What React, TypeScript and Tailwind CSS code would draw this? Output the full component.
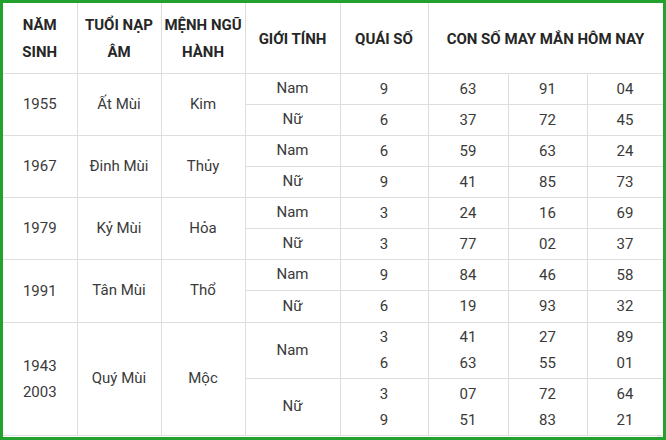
import React from "react";

type Sub = { g: string; q: string[]; a: string[]; b: string[]; c: string[] };
type Group = { years: string[]; tuoi: string; menh: string; subs: Sub[]; h: number[] };

const groups: Group[] = [
  { years: ["1955"], tuoi: "Ất Mùi", menh: "Kim", h: [31, 31], subs: [
    { g: "Nam", q: ["9"], a: ["63"], b: ["91"], c: ["04"] },
    { g: "Nữ", q: ["6"], a: ["37"], b: ["72"], c: ["45"] },
  ] },
  { years: ["1967"], tuoi: "Đinh Mùi", menh: "Thủy", h: [31, 31], subs: [
    { g: "Nam", q: ["6"], a: ["59"], b: ["63"], c: ["24"] },
    { g: "Nữ", q: ["9"], a: ["41"], b: ["85"], c: ["73"] },
  ] },
  { years: ["1979"], tuoi: "Kỷ Mùi", menh: "Hỏa", h: [31, 31], subs: [
    { g: "Nam", q: ["3"], a: ["24"], b: ["16"], c: ["69"] },
    { g: "Nữ", q: ["3"], a: ["77"], b: ["02"], c: ["37"] },
  ] },
  { years: ["1991"], tuoi: "Tân Mùi", menh: "Thổ", h: [31, 32], subs: [
    { g: "Nam", q: ["9"], a: ["84"], b: ["46"], c: ["58"] },
    { g: "Nữ", q: ["6"], a: ["19"], b: ["93"], c: ["32"] },
  ] },
  { years: ["1943", "2003"], tuoi: "Quý Mùi", menh: "Mộc", h: [56, 57], subs: [
    { g: "Nam", q: ["3", "6"], a: ["41", "63"], b: ["27", "55"], c: ["89", "01"] },
    { g: "Nữ", q: ["3", "9"], a: ["07", "51"], b: ["72", "83"], c: ["64", "21"] },
  ] },
];

const cell = "border border-[#dedede] text-center align-middle p-0";

function Lines({ v }: { v: string[] }) {
  return (
    <>
      {v.map((x, i) => (
        <div key={i} className="leading-[26px]">{x}</div>
      ))}
    </>
  );
}

export default function App() {
  return (
    <div className="w-[666px] h-[440px] bg-white border-[3px] border-[#23a12f] box-border overflow-hidden" style={{ fontFamily: "Roboto, 'Liberation Sans', sans-serif" }}>
      <table className="table-fixed border-collapse w-[660px] text-[15px] text-[#3a3a3a]">
        <colgroup>
          <col className="w-[74px]" />
          <col className="w-[84px]" />
          <col className="w-[84px]" />
          <col className="w-[95px]" />
          <col className="w-[88px]" />
          <col className="w-[80px]" />
          <col className="w-[79px]" />
          <col className="w-[76px]" />
        </colgroup>
        <thead>
          <tr className="h-[70px] font-bold text-[#262626] leading-[27px]">
            <th className={`${cell} border-t-0 border-l-0 pt-[3px]`}>NĂM<br />SINH</th>
            <th className={`${cell} border-t-0 pt-[3px]`}>TUỔI NẠP<br />ÂM</th>
            <th className={`${cell} border-t-0 pt-[3px]`}>MỆNH NGŨ<br />HÀNH</th>
            <th className={`${cell} border-t-0 pt-[3px]`}>GIỚI TÍNH</th>
            <th className={`${cell} border-t-0 pt-[3px]`}>QUÁI SỐ</th>
            <th colSpan={3} className={`${cell} border-t-0 pt-[3px]`}>CON SỐ MAY MẮN HÔM NAY</th>
          </tr>
        </thead>
        <tbody>
          {groups.map((g, gi) =>
            g.subs.map((s, si) => (
              <tr key={`${gi}-${si}`} style={{ height: g.h[si] }}>
                {si === 0 && (
                  <>
                    <td rowSpan={2} className={`${cell} border-l-0`}><Lines v={g.years} /></td>
                    <td rowSpan={2} className={cell}>{g.tuoi}</td>
                    <td rowSpan={2} className={cell}>{g.menh}</td>
                  </>
                )}
                <td className={cell}>{s.g}</td>
                <td className={cell}><Lines v={s.q} /></td>
                <td className={cell}><Lines v={s.a} /></td>
                <td className={cell}><Lines v={s.b} /></td>
                <td className={cell}><Lines v={s.c} /></td>
              </tr>
            ))
          )}
        </tbody>
      </table>
    </div>
  );
}
